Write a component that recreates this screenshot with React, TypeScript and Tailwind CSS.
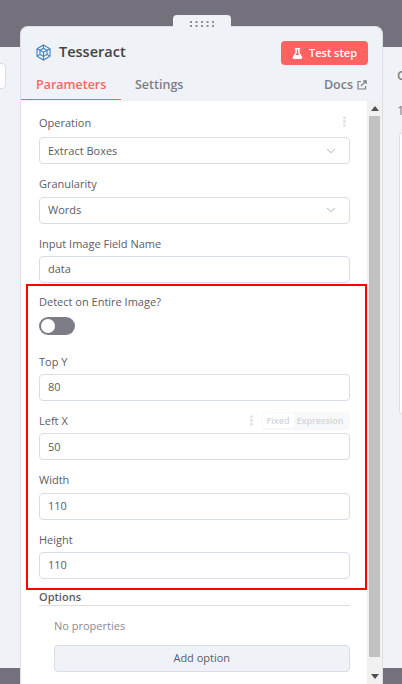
import { ChevronDown } from 'lucide-react';
import { FaFlask, FaEllipsisV } from 'react-icons/fa';

const sans = { fontFamily: '"Open Sans", sans-serif' };

function TesseractLogo() {
  return (
    <svg width="17" height="17" viewBox="0 0 17 17" fill="none" stroke="#3b82c4" strokeWidth="1.1">
      <path d="M8.5 1 15 4.7v7.6L8.5 16 2 12.3V4.7z" />
      <path d="M8.5 4.2 12 6.2v4.2l-3.5 2-3.500-2V6.200z" />
      <path d="M8.5 1v3.200M15 4.700l-3 1.500M2 4.700l3 1.500M15 12.300l-3-1.900M2 12.300l3-1.900M8.500 16v-3.600M5 6.200l3.500 2 3.500-2M8.500 8.200v4.200" />
    </svg>
  );
}

function DragDots() {
  return (
    <svg width="24" height="6" viewBox="0 0 24 6" fill="#8f8e98">
      {[0, 5.5, 11, 16.5, 22].map((x) => (
        <g key={x}>
          <rect x={x} y="0" width="2" height="2" />
          <rect x={x} y="4" width="2" height="2" />
        </g>
      ))}
    </svg>
  );
}

function DocsIcon() {
  return (
    <svg width="10" height="10" viewBox="0 0 10 10" fill="none" stroke="#7d7d87" strokeWidth="1.2">
      <path d="M8.500 6v3H1V1.500h3" />
      <path d="M4 6l5-5M6 .8h3.200V4" />
    </svg>
  );
}

function Field({ label, value, select, first, children }: { label: string; value: string; select?: boolean; first?: boolean; children?: React.ReactNode }) {
  return (
    <div className="mb-[7px]">
      <div className={`relative flex h-[25.400px] items-start text-[11px] leading-[18px] text-[#5c5c66] ${first ? 'pt-[2px]' : 'pt-[4px]'}`}>
        {label}
        {children}
      </div>
      <div className="flex h-[27px] items-center justify-between rounded-[4px] border border-[#d8dde8] bg-white pl-[8px] pr-[11px] text-[11px] text-[#5c5c66]">
        {value}
        {select && <ChevronDown size={14} strokeWidth={1.2} color="#8a8a94" />}
      </div>
    </div>
  );
}

export default function App() {
  return (
    <div className="relative flex h-[684px] w-[402px] overflow-hidden bg-[#74717d]" style={sans}>
      <div className="mt-[47px] h-[621px] w-[20px] shrink-0 bg-[#eff2f7]">
        <div className="ml-[-8px] mt-[16px] h-[26px] w-[14px] rounded-[4px] border border-[#d8dde8] bg-white" />
      </div>

      <div className="relative mt-[26px] h-[680px] w-[363px] shrink-0 overflow-hidden rounded-t-[8px] border border-b-0 border-[#dbdfe7] bg-[#eff2f7]">
        <div className="flex h-[73px] flex-col">
          <div className="flex h-[49px] items-start justify-between pl-[14px] pr-[14px] pt-[14px]">
            <div className="flex items-center gap-[7px] pt-[1px]">
              <TesseractLogo />
              <span className="text-[14.500px] font-semibold leading-[20px] text-[#444]">Tesseract</span>
            </div>
            <button className="flex h-[24px] w-[87px] items-center justify-center gap-[6px] rounded-[4px] bg-[#ff6361] text-[11px] font-semibold text-white">
              <FaFlask size={11} />
              Test step
            </button>
          </div>
          <div className="flex h-[24px] items-start justify-between pr-[15px] text-[12.500px] font-semibold leading-[18px]">
            <div className="flex">
              <div className="h-[24px] w-[100px] border-b-[1px] border-[#ff6361] pl-[15px] text-[#ff6361]">Parameters</div>
              <div className="pl-[14px] text-[#7d7d87]">Settings</div>
            </div>
            <div className="flex items-center gap-[4px] text-[#7d7d87]">
              Docs
              <DocsIcon />
            </div>
          </div>
        </div>

        <div className="flex h-[606px] pt-[1px]">
          <div className="w-[347px] bg-white pl-[18px] pr-[17.500px] pt-[11px]">
            <Field label="Operation" value="Extract Boxes" select first>
              <FaEllipsisV size={11} color="#dfe3ea" className="absolute right-0 top-[4px]" />
            </Field>
            <Field label="Granularity" value="Words" select />
            <Field label="Input Image Field Name" value="data" />
            <div className="h-[58.400px] text-[11px] leading-[18px] text-[#5c5c66]">
              <div className="pt-[3px]">Detect on Entire Image?</div>
              <div className="mt-[6px] flex h-[18px] w-[36px] items-center rounded-full bg-[#7d7d87] pl-[2px]">
                <div className="h-[14px] w-[14px] rounded-full bg-white" />
              </div>
            </div>
            <Field label="Top Y" value="80" />
            <Field label="Left X" value="50">
              <div className="absolute right-0 top-[4px] flex items-center text-[9px] font-semibold">
                <FaEllipsisV size={11} color="#dfe3ea" className="mr-[5px]" />
                <div className="flex h-[18px] w-[88px] items-center justify-between rounded-[4px] bg-[#f7f8fa] p-[1px] text-[#d4d6dc]">
                  <span className="rounded-[3px] bg-white px-[4px] leading-[15px]">Fixed</span>
                  <span className="pr-[5px]">Expression</span>
                </div>
              </div>
            </Field>
            <Field label="Width" value="110" />
            <Field label="Height" value="110" />
            <div className="border-b border-[#d8dde8] pt-[3px] text-[11px] font-semibold leading-[16px] text-[#5c5c66]">Options</div>
            <div className="pl-[15px]">
              <div className="pt-[12px] text-[11px] leading-[16px] text-[#8a8a94]">No properties</div>
              <div className="mt-[11px] flex h-[27px] items-center justify-center rounded-[4px] border border-[#d8dde8] bg-[#eff2f7] text-[11px] text-[#5c5c66]">Add option</div>
            </div>
          </div>
          <div className="relative flex h-[584px] w-[15px] flex-col items-center bg-[#f1f1f1]">
            <div className="mt-[5px] h-0 w-0 border-x-[4px] border-b-[5px] border-x-transparent border-b-[#505050]" />
            <div className="mt-[5px] h-[541px] w-[11px] bg-[#c1c1c1]" />
            <div className="mt-[17px] h-0 w-0 border-x-[4px] border-t-[5px] border-x-transparent border-t-[#505050]" />
          </div>
        </div>
      </div>

      <div className="mt-[47px] h-[621px] flex-1 bg-[#eff2f7] pl-[14px] text-[12.500px] font-semibold leading-[18px] text-[#7d7d87]">
        <div className="pt-[20px]">O</div>
        <div className="pt-[17px] font-normal">1</div>
        <div className="ml-[2px] mt-[12px] h-[283px] rounded-l-[4px] border border-[#d8dde8] bg-white" />
      </div>

      <div className="pointer-events-none absolute left-[26px] top-[284px] h-[306px] w-[341px] border-2 border-[#ff0000]" />

      <div className="absolute left-[173px] top-[15px] flex h-[12px] w-[58px] items-start justify-center rounded-t-[4px] bg-[#eff2f7] pt-[6px]">
        <DragDots />
      </div>
    </div>
  );
}
